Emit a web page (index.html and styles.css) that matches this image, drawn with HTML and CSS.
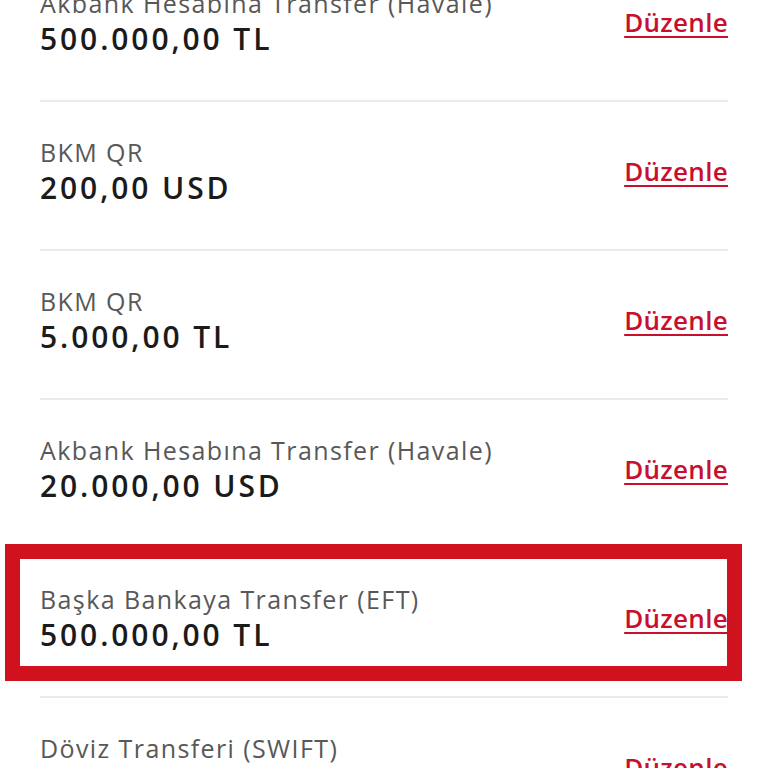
FILE: index.html
```html
<!DOCTYPE html>
<html lang="tr">
<head>
    <meta charset="UTF-8">
    <meta name="viewport" content="width=device-width, initial-scale=1.0">
    <title>Limitler</title>
    <link rel="stylesheet" href="styles.css">
</head>
<body>
    <ul class="limit-list">
        <li class="limit-row">
            <div class="limit-info">
                <div class="limit-label">Akbank Hesabına Transfer (Havale)</div>
                <div class="limit-amount">500.000,00 TL</div>
            </div>
            <a class="edit-link" href="#">Düzenle</a>
        </li>
        <li class="limit-row">
            <div class="limit-info">
                <div class="limit-label">BKM QR</div>
                <div class="limit-amount">200,00 USD</div>
            </div>
            <a class="edit-link" href="#">Düzenle</a>
        </li>
        <li class="limit-row">
            <div class="limit-info">
                <div class="limit-label">BKM QR</div>
                <div class="limit-amount">5.000,00 TL</div>
            </div>
            <a class="edit-link" href="#">Düzenle</a>
        </li>
        <li class="limit-row">
            <div class="limit-info">
                <div class="limit-label">Akbank Hesabına Transfer (Havale)</div>
                <div class="limit-amount">20.000,00 USD</div>
            </div>
            <a class="edit-link" href="#">Düzenle</a>
        </li>
        <li class="limit-row highlighted">
            <div class="limit-info">
                <div class="limit-label">Başka Bankaya Transfer (EFT)</div>
                <div class="limit-amount">500.000,00 TL</div>
            </div>
            <a class="edit-link" href="#">Düzenle</a>
            <!-- red annotation frame over the row -->
            <span class="highlight-frame"></span>
        </li>
        <li class="limit-row">
            <div class="limit-info">
                <div class="limit-label">Döviz Transferi (SWIFT)</div>
                <div class="limit-amount">10.000,00 USD</div>
            </div>
            <a class="edit-link" href="#">Düzenle</a>
        </li>
    </ul>
</body>
</html>
```

FILE: styles.css
```css
body {
    margin: 0;
    padding: 0 40px;
    background: #fff;
    font-family: "Open Sans", "Noto Sans", sans-serif;
    overflow: hidden;
}
.limit-list {
    list-style: none;
    margin: -47px 0 0 0;
    padding: 0;
}
.limit-row {
    position: relative;
    display: flex;
    align-items: center;
    justify-content: space-between;
    height: 147px;
    padding: 0;
    border-bottom: 2px solid #ebebeb;
}
.limit-info {
    display: flex;
    flex-direction: column;
    margin-top: -12px;
}
.limit-label {
    font-size: 25px;
    line-height: 36px;
    letter-spacing: 1.4px;
    color: #585858;
}
.limit-amount {
    font-size: 30px;
    line-height: 36px;
    font-weight: 600;
    letter-spacing: 2.9px;
    color: #1b1b1b;
}
.edit-link {
    margin-top: -10px;
    font-size: 26px;
    font-weight: 600;
    letter-spacing: 0.3px;
    color: #c8102e;
    text-decoration: underline;
    text-decoration-thickness: 2px;
    text-underline-offset: 4px;
}
.highlight-frame {
    position: absolute;
    top: -5px;
    left: -35px;
    width: 707px;
    height: 107px;
    border: 15px solid #d0121f;
    pointer-events: none;
}
```
